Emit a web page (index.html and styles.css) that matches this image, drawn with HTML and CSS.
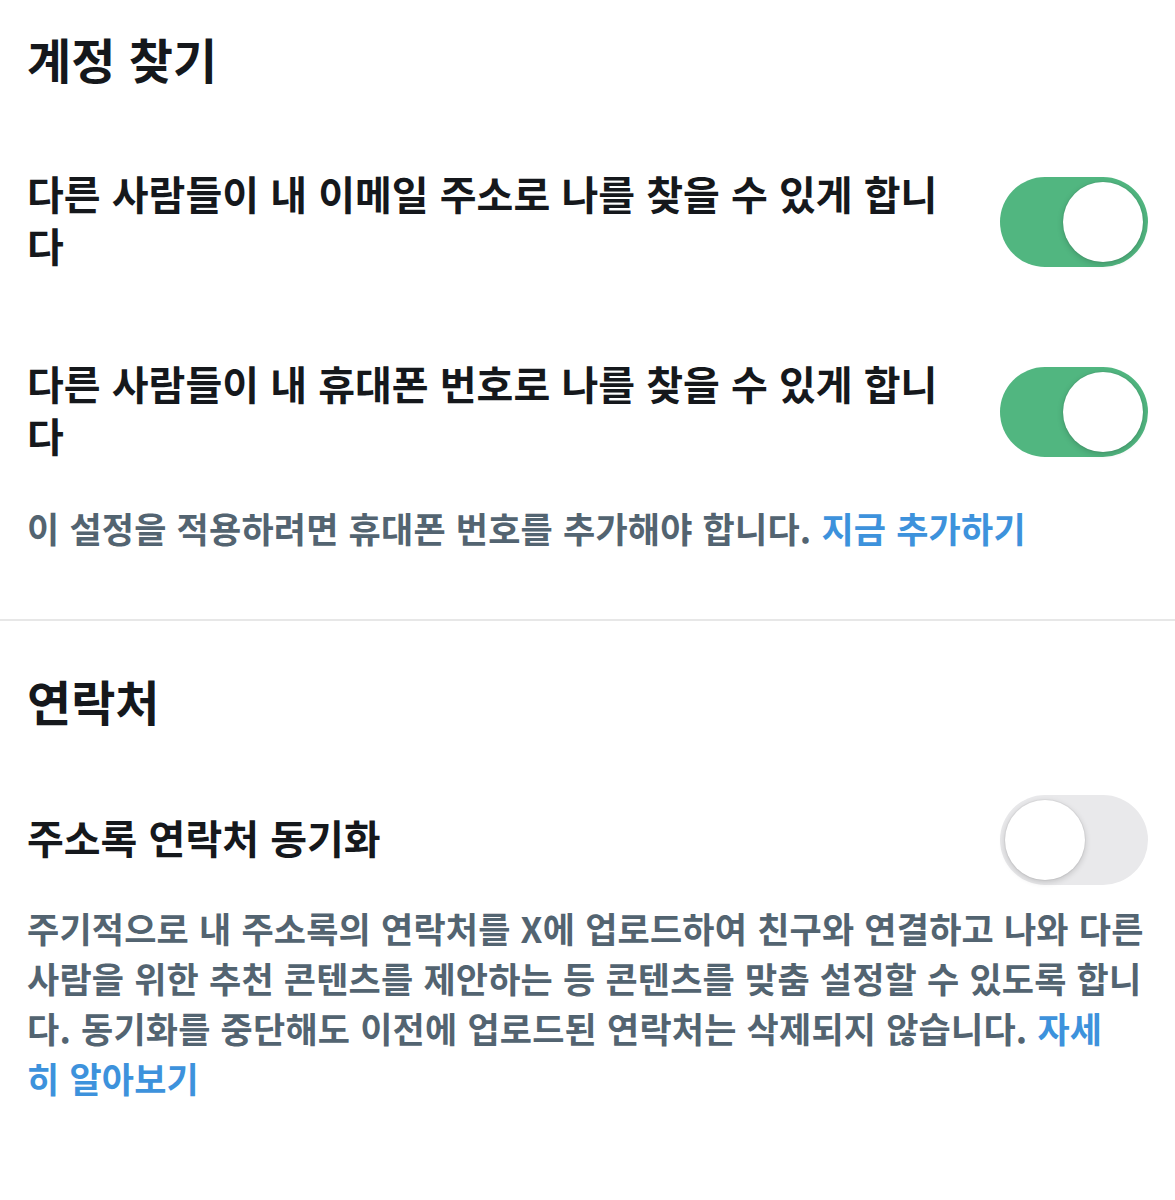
FILE: index.html
```html
<!DOCTYPE html>
<html lang="ko">
<head>
<meta charset="UTF-8" />
<meta name="viewport" content="width=device-width, initial-scale=1" />
<title>검색 가능성 및 연락처</title>
<link rel="stylesheet" href="styles.css">
</head>
<body>

<section class="group">
  <h2 class="group-title">계정 찾기</h2>

  <div class="row">
    <span class="row-label">다른 사람들이 내 이메일 주소로 나를 찾을 수 있게 합니다</span>
    <span class="switch on"><span class="knob"></span></span>
  </div>

  <div class="row row-next">
    <span class="row-label">다른 사람들이 내 휴대폰 번호로 나를 찾을 수 있게 합니다</span>
    <span class="switch on"><span class="knob"></span></span>
  </div>

  <p class="note">이 설정을 적용하려면 휴대폰 번호를 추가해야 합니다. <a href="#">지금 추가하기</a></p>
</section>

<hr class="divider">

<section class="group">
  <h2 class="group-title contacts">연락처</h2>

  <div class="row row-single">
    <span class="row-label">주소록 연락처 동기화</span>
    <span class="switch"><span class="knob"></span></span>
  </div>

  <p class="note desc">주기적으로 내 주소록의 연락처를 X에 업로드하여 친구와 연결하고 나와 다른 사람을 위한 추천 콘텐츠를 제안하는 등 콘텐츠를 맞춤 설정할 수 있도록 합니다. 동기화를 중단해도 이전에 업로드된 연락처는 삭제되지 않습니다. <a href="#">자세<br>히 알아보기</a></p>
</section>

</body>
</html>
```

FILE: styles.css
```css
/* 기본 */
body {
  margin: 0;
  background: #fff;
  color: #15181c;
  font-family: "Noto Sans CJK KR", "Noto Sans", sans-serif;
}

.group {
  padding: 0 27px;
}

.group-title {
  margin: 28px 0 0;
  font-size: 48px;
  line-height: 60px;
  font-weight: 700;
}

.group-title.contacts {
  margin-top: 49px;
}

/* 설정 행 + 스위치 */
.row {
  display: flex;
  align-items: center;
  gap: 40px;
  margin-top: 79px;
}

.row-next {
  margin-top: 80px;
}

.row-single {
  margin-top: 65px;
}

.row-label {
  flex: 1;
  padding-bottom: 6px;
  font-size: 40px;
  line-height: 52px;
  font-weight: 700;
}

.switch {
  flex: none;
  position: relative;
  width: 148px;
  height: 90px;
  border-radius: 45px;
  background: #e9e9eb;
}

.switch .knob {
  position: absolute;
  top: 5px;
  left: 5px;
  width: 80px;
  height: 80px;
  border-radius: 50%;
  background: #fff;
  box-shadow: 0 2px 6px rgba(0, 0, 0, 0.18), 0 0 0 1px rgba(0, 0, 0, 0.04);
}

.switch.on {
  background: #51b680;
}

.switch.on .knob {
  left: 63px;
}

/* 안내 문구 */
.note {
  margin: 36px 0 0;
  color: #536471;
  font-size: 35px;
  line-height: 50px;
  font-weight: 700;
  letter-spacing: 0.2px;
}

.note.desc {
  margin-top: 18px;
}

.note a {
  color: #3d92dc;
  text-decoration: none;
}

.divider {
  margin: 66px 0 0;
  border: 0;
  height: 2px;
  background: #e7e7e7;
}
```
